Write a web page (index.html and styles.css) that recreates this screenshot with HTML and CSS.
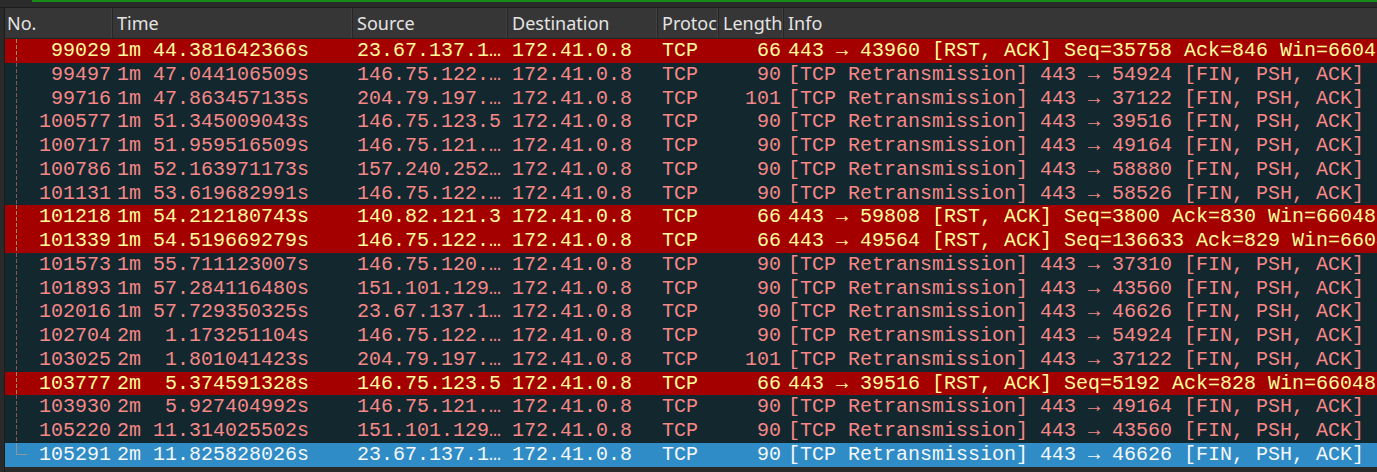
FILE: index.html
```html
<!DOCTYPE html>
<html>
<head>
<meta charset="utf-8">
<title>Packet list</title>
<link rel="stylesheet" href="styles.css">
</head>
<body>
<div class="app">
  <div class="filterbar"><div class="filter-line"></div></div>
  <div class="packetlist">
    <div class="header cols">
      <div class="hcell">No.</div>
      <div class="hcell">Time</div>
      <div class="hcell">Source</div>
      <div class="hcell">Destination</div>
      <div class="hcell">Protocol</div>
      <div class="hcell">Length</div>
      <div class="hcell last">Info</div>
    </div>
    <div class="rows">
      <div class="row cols rst"><div class="c no">99029</div><div class="c">1m 44.381642366s</div><div class="c">23.67.137.1…</div><div class="c">172.41.0.8</div><div class="c">TCP</div><div class="c len">66</div><div class="c">443 → 43960 [RST, ACK] Seq=35758 Ack=846 Win=66048</div></div>
      <div class="row cols bad"><div class="c no">99497</div><div class="c">1m 47.044106509s</div><div class="c">146.75.122.…</div><div class="c">172.41.0.8</div><div class="c">TCP</div><div class="c len">90</div><div class="c">[TCP Retransmission] 443 → 54924 [FIN, PSH, ACK]</div></div>
      <div class="row cols bad"><div class="c no">99716</div><div class="c">1m 47.863457135s</div><div class="c">204.79.197.…</div><div class="c">172.41.0.8</div><div class="c">TCP</div><div class="c len">101</div><div class="c">[TCP Retransmission] 443 → 37122 [FIN, PSH, ACK]</div></div>
      <div class="row cols bad"><div class="c no">100577</div><div class="c">1m 51.345009043s</div><div class="c">146.75.123.5</div><div class="c">172.41.0.8</div><div class="c">TCP</div><div class="c len">90</div><div class="c">[TCP Retransmission] 443 → 39516 [FIN, PSH, ACK]</div></div>
      <div class="row cols bad"><div class="c no">100717</div><div class="c">1m 51.959516509s</div><div class="c">146.75.121.…</div><div class="c">172.41.0.8</div><div class="c">TCP</div><div class="c len">90</div><div class="c">[TCP Retransmission] 443 → 49164 [FIN, PSH, ACK]</div></div>
      <div class="row cols bad"><div class="c no">100786</div><div class="c">1m 52.163971173s</div><div class="c">157.240.252…</div><div class="c">172.41.0.8</div><div class="c">TCP</div><div class="c len">90</div><div class="c">[TCP Retransmission] 443 → 58880 [FIN, PSH, ACK]</div></div>
      <div class="row cols bad"><div class="c no">101131</div><div class="c">1m 53.619682991s</div><div class="c">146.75.122.…</div><div class="c">172.41.0.8</div><div class="c">TCP</div><div class="c len">90</div><div class="c">[TCP Retransmission] 443 → 58526 [FIN, PSH, ACK]</div></div>
      <div class="row cols rst"><div class="c no">101218</div><div class="c">1m 54.212180743s</div><div class="c">140.82.121.3</div><div class="c">172.41.0.8</div><div class="c">TCP</div><div class="c len">66</div><div class="c">443 → 59808 [RST, ACK] Seq=3800 Ack=830 Win=66048</div></div>
      <div class="row cols rst"><div class="c no">101339</div><div class="c">1m 54.519669279s</div><div class="c">146.75.122.…</div><div class="c">172.41.0.8</div><div class="c">TCP</div><div class="c len">66</div><div class="c">443 → 49564 [RST, ACK] Seq=136633 Ack=829 Win=66048</div></div>
      <div class="row cols bad"><div class="c no">101573</div><div class="c">1m 55.711123007s</div><div class="c">146.75.120.…</div><div class="c">172.41.0.8</div><div class="c">TCP</div><div class="c len">90</div><div class="c">[TCP Retransmission] 443 → 37310 [FIN, PSH, ACK]</div></div>
      <div class="row cols bad"><div class="c no">101893</div><div class="c">1m 57.284116480s</div><div class="c">151.101.129…</div><div class="c">172.41.0.8</div><div class="c">TCP</div><div class="c len">90</div><div class="c">[TCP Retransmission] 443 → 43560 [FIN, PSH, ACK]</div></div>
      <div class="row cols bad"><div class="c no">102016</div><div class="c">1m 57.729350325s</div><div class="c">23.67.137.1…</div><div class="c">172.41.0.8</div><div class="c">TCP</div><div class="c len">90</div><div class="c">[TCP Retransmission] 443 → 46626 [FIN, PSH, ACK]</div></div>
      <div class="row cols bad"><div class="c no">102704</div><div class="c">2m  1.173251104s</div><div class="c">146.75.122.…</div><div class="c">172.41.0.8</div><div class="c">TCP</div><div class="c len">90</div><div class="c">[TCP Retransmission] 443 → 54924 [FIN, PSH, ACK]</div></div>
      <div class="row cols bad"><div class="c no">103025</div><div class="c">2m  1.801041423s</div><div class="c">204.79.197.…</div><div class="c">172.41.0.8</div><div class="c">TCP</div><div class="c len">101</div><div class="c">[TCP Retransmission] 443 → 37122 [FIN, PSH, ACK]</div></div>
      <div class="row cols rst"><div class="c no">103777</div><div class="c">2m  5.374591328s</div><div class="c">146.75.123.5</div><div class="c">172.41.0.8</div><div class="c">TCP</div><div class="c len">66</div><div class="c">443 → 39516 [RST, ACK] Seq=5192 Ack=828 Win=66048</div></div>
      <div class="row cols bad"><div class="c no">103930</div><div class="c">2m  5.927404992s</div><div class="c">146.75.121.…</div><div class="c">172.41.0.8</div><div class="c">TCP</div><div class="c len">90</div><div class="c">[TCP Retransmission] 443 → 49164 [FIN, PSH, ACK]</div></div>
      <div class="row cols bad"><div class="c no">105220</div><div class="c">2m 11.314025502s</div><div class="c">151.101.129…</div><div class="c">172.41.0.8</div><div class="c">TCP</div><div class="c len">90</div><div class="c">[TCP Retransmission] 443 → 43560 [FIN, PSH, ACK]</div></div>
      <div class="row cols sel"><div class="c no end">105291</div><div class="c">2m 11.825828026s</div><div class="c">23.67.137.1…</div><div class="c">172.41.0.8</div><div class="c">TCP</div><div class="c len">90</div><div class="c">[TCP Retransmission] 443 → 46626 [FIN, PSH, ACK]</div></div>
    </div>
  </div>
</div>
</body>
</html>
```
FILE: styles.css
```css
html, body {
  margin: 0;
  padding: 0;
  background: #2a2a2a;
}

.app {
  width: 1377px;
  height: 472px;
  overflow: hidden;
  background: #2a2a2a;
  display: flex;
  flex-direction: column;
}

.filterbar {
  flex: none;
  height: 7px;
  border-bottom: 1px solid #1c1c1c;
  background: #2b2b2b;
}

.filter-line {
  margin-left: 32px;
  height: 2px;
  background: #178a17;
}

.packetlist {
  flex: 1;
  min-height: 0;
  margin-left: 4px;
  border-left: 1px solid #1c1c1c;
  display: flex;
  flex-direction: column;
}

.cols {
  display: grid;
  grid-template-columns: 108px 240px 155px 150px 61px 65px 1fr;
}

.header {
  flex: none;
  height: 30px;
  background: #363636;
  border-bottom: 1px solid #242424;
  font-family: "Noto Sans", sans-serif;
  font-size: 18px;
  color: #e4e4e4;
}

.hcell {
  padding-left: 4px;
  padding-top: 1px;
  line-height: 29px;
  white-space: nowrap;
  overflow: hidden;
  border-right: 1px solid #262626;
  box-shadow: inset -1px 0 #414141;
}

.hcell:first-child {
  padding-left: 2px;
}

.hcell.last {
  border-right: none;
  box-shadow: none;
}

.rows {
  display: flex;
  flex-direction: column;
}

.row {
  height: 23.76px;
  line-height: 23.76px;
  font-family: "Liberation Mono", monospace;
  font-size: 20px;
}

.c {
  padding-left: 4px;
  white-space: pre;
  overflow: hidden;
}

.c.no {
  padding-left: 0;
  padding-right: 2px;
  text-align: right;
  background-image: repeating-linear-gradient(to bottom, var(--tree) 0 4px, transparent 4px 6px);
  background-size: 1px 100%;
  background-position: 11px 0;
  background-repeat: no-repeat;
}

.c.no.end {
  background-image: linear-gradient(var(--tree), var(--tree)), linear-gradient(var(--tree), var(--tree));
  background-size: 1px 50%, 11px 1px;
  background-position: 11px 0, 11px 50%;
  background-repeat: no-repeat;
}

.c.len {
  padding-left: 0;
  padding-right: 3px;
  text-align: right;
}

.bad {
  background: #12272e;
  color: #f78787;
  --tree: #84575a;
}

.rst {
  background: #a40000;
  color: #fffc9c;
  --tree: #8d9166;
}

.sel {
  background: #308cc6;
  color: #f4f8fc;
  --tree: #8a979c;
}
```
